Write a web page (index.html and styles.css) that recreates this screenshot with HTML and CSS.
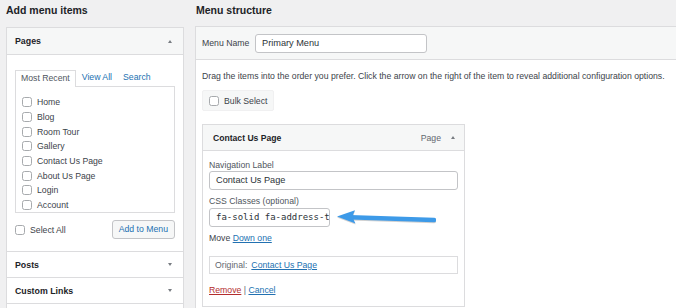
FILE: index.html
```html
<!DOCTYPE html>
<html>
<head>
<meta charset="utf-8">
<link rel="stylesheet" href="styles.css">
</head>
<body>
<div class="page">
  <div class="col-left">
    <h2 class="col-title">Add menu items</h2>
    <div class="accordion">
      <div class="acc-head open">
        <span>Pages</span><span class="tri-up"></span>
      </div>
      <div class="acc-body">
        <div class="tabs">
          <span class="tab active">Most Recent</span>
          <span class="tab tablink">View All</span>
          <span class="tab tablink">Search</span>
        </div>
        <div class="list">
          <div class="row"><span class="cb"></span>Home</div>
          <div class="row"><span class="cb"></span>Blog</div>
          <div class="row"><span class="cb"></span>Room Tour</div>
          <div class="row"><span class="cb"></span>Gallery</div>
          <div class="row"><span class="cb"></span>Contact Us Page</div>
          <div class="row"><span class="cb"></span>About Us Page</div>
          <div class="row"><span class="cb"></span>Login</div>
          <div class="row"><span class="cb"></span>Account</div>
        </div>
        <div class="actions">
          <label class="select-all"><span class="cb"></span>Select All</label>
          <span class="btn">Add to Menu</span>
        </div>
      </div>
      <div class="acc-head closed"><span>Posts</span><span class="tri-down"></span></div>
      <div class="acc-head closed"><span>Custom Links</span><span class="tri-down"></span></div>
      <div class="acc-head closed"></div>
    </div>
  </div>

  <div class="col-right">
    <h2 class="col-title right">Menu structure</h2>
    <div class="menu-box">
      <div class="menu-head">
        <span class="menu-label">Menu Name</span>
        <span class="input name-input">Primary Menu</span>
      </div>
      <div class="menu-body">
        <p class="desc">Drag the items into the order you prefer. Click the arrow on the right of the item to reveal additional configuration options.</p>
        <div class="bulk"><span class="cb"></span>Bulk Select</div>
        <div class="item">
          <div class="item-head">
            <span class="item-title">Contact Us Page</span>
            <span class="item-controls"><span class="item-type">Page</span><span class="tri-up"></span></span>
          </div>
          <div class="item-body">
            <div class="field-label">Navigation Label</div>
            <div class="input wide-input">Contact Us Page</div>
            <div class="field-label css-label">CSS Classes (optional)</div>
            <div class="css-row">
              <div class="input css-input">fa-solid fa-address-t</div>
              <svg class="arrow" width="100" height="19" viewBox="0 0 100 19">
                <g transform="translate(0,1)" fill="rgba(0,0,0,0.18)" stroke="rgba(0,0,0,0.18)">
                  <line x1="14" y1="9.2" x2="98" y2="12" stroke-width="4.5" stroke-linecap="round"/>
                  <path d="M1 8.6 L19 2.2 Q15 8.8 19.5 15.6 Z" stroke="none"/>
                </g>
                <line x1="14" y1="9.2" x2="98" y2="12" stroke="#3d9ae8" stroke-width="4.5" stroke-linecap="round"/>
                <path d="M1 8.6 L19 2.2 Q15 8.8 19.5 15.6 Z" fill="#3d9ae8"/>
              </svg>
            </div>
            <div class="move">Move <a class="link">Down one</a></div>
            <div class="original">Original: <a class="link">Contact Us Page</a></div>
            <div class="item-actions"><a class="remove">Remove</a> <span class="sep">|</span> <a class="link">Cancel</a></div>
          </div>
        </div>
      </div>
    </div>
  </div>
</div>
</body>
</html>
```

FILE: styles.css
```css
* { box-sizing: border-box; }
html, body { margin: 0; padding: 0; }
body {
  background: #f0f0f1;
  font-family: "Liberation Sans", Arial, sans-serif;
  font-size: 8.7px;
  color: #3c434a;
  width: 676px;
  height: 308px;
  overflow: hidden;
}
.page {
  display: flex;
  gap: 11px;
  padding-left: 6px;
}
.col-left { width: 178px; flex: none; }
.col-right { flex: none; width: 490px; }
.col-title {
  margin: 0;
  height: 27px;
  line-height: 21px;
  font-size: 10.5px;
  font-weight: bold;
  color: #1d2327;
}
.col-title.right { height: 26px; padding-left: 1px; }

/* checkbox */
.cb {
  display: inline-block;
  width: 10px;
  height: 10px;
  border: 1px solid #a7aaad;
  border-radius: 2.5px;
  background: #fff;
  flex: none;
}

/* left accordion */
.accordion {
  border: 1px solid #dcdcde;
  background: #fff;
}
.acc-head {
  height: 26px;
  padding: 0 11px 0 8px;
  display: flex;
  align-items: center;
  justify-content: space-between;
  font-size: 8.8px;
  font-weight: bold;
  color: #1d2327;
  border-bottom: 1px solid #dcdcde;
}
.acc-head.open { background: #f6f7f7; height: 27px; }
.acc-head.closed { height: 26px; }
.tri-up, .tri-down {
  width: 0; height: 0;
  border-left: 2.5px solid transparent;
  border-right: 2.5px solid transparent;
}
.tri-up { border-bottom: 3.5px solid #787c82; }
.tri-down { border-top: 3.5px solid #787c82; }

.acc-body {
  padding: 15px 8px 12px 8px;
  border-bottom: 1px solid #dcdcde;
}
.tabs { display: flex; height: 16px; }
.tab {
  line-height: 15px;
  padding: 0 5px;
}
.tab.active {
  border: 1px solid #dcdcde;
  border-bottom: none;
  background: #fff;
  color: #50575e;
  position: relative;
  z-index: 1;
  height: 17px;
}
.tab.tablink { color: #2271b1; margin-left: 1px; }
.list {
  border: 1px solid #dcdcde;
  height: 127px;
  padding: 8px 0 0 6px;
  overflow: hidden;
}
.row {
  height: 14.7px;
  display: flex;
  align-items: center;
  gap: 5px;
  color: #3c434a;
}
.actions {
  margin-top: 7px;
  height: 19px;
  display: flex;
  align-items: center;
  justify-content: space-between;
}
.select-all { display: flex; align-items: center; gap: 5px; }
.btn {
  height: 19px;
  line-height: 17px;
  padding: 0 6px;
  border: 1px solid #c3c4c7;
  border-radius: 3px;
  background: #f6f7f7;
  color: #2271b1;
}

/* right menu box */
.menu-box {
  border: 1px solid #dcdcde;
  border-right: none;
  background: #fff;
  height: 300px;
}
.menu-head {
  height: 33px;
  background: #f6f7f7;
  border-bottom: 1px solid #dcdcde;
  display: flex;
  align-items: center;
  padding: 0 6px;
}
.menu-label { width: 53px; color: #3c434a; }
.input {
  border: 1px solid #c3c4c7;
  border-radius: 3px;
  background: #fff;
  height: 19px;
  line-height: 17px;
  padding: 0 6px;
  font-size: 9.2px;
  color: #2c3338;
  white-space: nowrap;
  overflow: hidden;
}
.name-input { width: 172px; }
.menu-body { padding: 10px 6px 0 6px; }
.desc { margin: 0; line-height: 12px; color: #3c434a; }
.bulk {
  margin-top: 8px;
  width: 72px;
  height: 21px;
  background: #f6f7f7;
  border: 1px solid #f0f0f1;
  border-radius: 2px;
  display: flex;
  align-items: center;
  gap: 5px;
  padding-left: 6px;
  color: #3c434a;
}
.item {
  margin-top: 13px;
  width: 263px;
  border: 1px solid #dcdcde;
}
.item-head {
  height: 26px;
  background: #f6f7f7;
  border-bottom: 1px solid #dcdcde;
  display: flex;
  align-items: center;
  justify-content: space-between;
  padding: 0 9px 0 10px;
}
.item-title { font-weight: bold; color: #1d2327; font-size: 8.6px; }
.item-controls { display: flex; align-items: center; gap: 10px; }
.item-type { color: #646970; }
.item-body { padding: 8px 6px 10px 6px; }
.field-label { line-height: 12px; color: #50575e; }
.wide-input { width: 249px; }
.css-label { margin-top: 5px; margin-bottom: 1px; }
.css-row { display: flex; align-items: center; gap: 6px; }
.css-input {
  width: 121px;
  font-family: "DejaVu Sans Mono", "Liberation Mono", monospace;
  font-size: 9px;
  padding-right: 2px;
}
.arrow { flex: none; display: block; }
.move { margin-top: 5px; line-height: 12px; color: #3c434a; }
.link { color: #2271b1; text-decoration: underline; }
.original {
  margin-top: 12px;
  width: 249px;
  height: 18px;
  border: 1px solid #dcdcde;
  display: flex;
  align-items: center;
  gap: 4px;
  padding-left: 5px;
  color: #646970;
}
.item-actions { margin-top: 10px; line-height: 12px; }
.remove { color: #b32d2e; text-decoration: underline; }
.sep { color: #646970; }
```
